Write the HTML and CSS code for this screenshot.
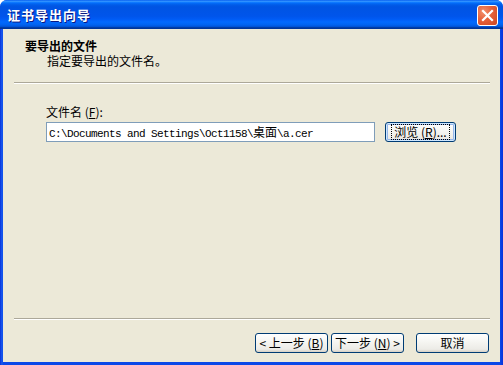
FILE: index.html
```html
<!DOCTYPE html>
<html lang="zh-CN">
<head>
<meta charset="utf-8">
<title>证书导出向导</title>
<link rel="stylesheet" href="styles.css">
</head>
<body>
<div class="window">
  <div class="titlebar">
    <span class="title">证书导出向导</span>
    <span class="close" aria-label="关闭">
      <svg width="13" height="13" viewBox="0 0 13 13"><path d="M2 2 L11 11 M11 2 L2 11" stroke="#fff" stroke-width="2.2" stroke-linecap="square"/></svg>
    </span>
  </div>
  <div class="client">
    <div class="header">
      <div class="h-title">要导出的文件</div>
      <div class="h-sub">指定要导出的文件名。</div>
    </div>
    <div class="sep"></div>
    <div class="body">
      <div class="label">文件名 (<u>F</u>):</div>
      <div class="row">
        <div class="input">C:\Documents and Settings\Oct1158\<span class="cjk">桌面</span>\a.cer</div>
        <div class="btn default"><span class="focus">浏览 (<u>R</u>)...</span></div>
      </div>
    </div>
    <div class="sep"></div>
    <div class="footer">
      <div class="btn">&lt; 上一步 (<u>B</u>)</div>
      <div class="btn">下一步 (<u>N</u>) &gt;</div>
      <div class="btn cancel">取消</div>
    </div>
  </div>
</div>
</body>
</html>
```

FILE: styles.css
```css
html, body {
  margin: 0;
  padding: 0;
  background: #ffffff;
}
body {
  font-family: "Noto Sans CJK SC", "Liberation Sans", sans-serif;
  font-size: 12px;
  color: #000;
}
.window {
  width: 503px;
  height: 365px;
  display: flex;
  flex-direction: column;
  border-radius: 7px 7px 0 0;
  overflow: hidden;
  background: linear-gradient(to right, #0831d9 0, #1a5cf0 2px, #0a48e8 3px, #0a48e8 500px, #0831d9 503px);
  box-sizing: border-box;
}
.titlebar {
  height: 29px;
  flex: 0 0 29px;
  display: flex;
  align-items: center;
  justify-content: space-between;
  padding: 0 5px 0 7px;
  background: linear-gradient(to bottom, #0058ee 0%, #3593ff 4%, #288eff 6%, #127dff 8%, #036ffc 10%, #0262ee 14%, #0057e5 20%, #0054e3 24%, #0055eb 56%, #005bf5 66%, #026afe 76%, #0062ef 86%, #0052d6 92%, #0040ab 94%, #003092 100%);
}
.title {
  color: #fff;
  font-weight: bold;
  font-size: 13px;
  letter-spacing: 1px;
  text-shadow: 1px 1px 0 #0a1883;
  line-height: 16px;
}
.close {
  width: 19px;
  height: 19px;
  margin-top: 1px;
  border: 1px solid #fff;
  border-radius: 3px;
  background: radial-gradient(circle at 30% 30%, #f28f6c 0, #e5603a 45%, #cc4520 100%);
  display: flex;
  align-items: center;
  justify-content: center;
}
.client {
  flex: 1;
  margin: 0 3px 3px 3px;
  background: #ece9d8;
  display: flex;
  flex-direction: column;
}
.header {
  padding: 9px 0 0 22px;
  line-height: 15px;
  height: 53px;
  box-sizing: border-box;
}
.h-title {
  font-weight: bold;
}
.h-sub {
  padding-left: 22px;
}
.sep {
  border-top: 1px solid #aca899;
  border-bottom: 1px solid #ffffff;
  margin: 0 10px 0 11px;
}
.body {
  flex: 1;
  padding: 21px 0 0 43px;
}
.label {
  line-height: 14px;
  height: 14px;
  margin-bottom: 3px;
}
.row {
  display: flex;
  gap: 10px;
  align-items: flex-start;
}
.input {
  width: 329px;
  height: 20px;
  box-sizing: border-box;
  border: 1px solid #7f9db9;
  background: #fff;
  padding: 0 2px;
  font-family: "Liberation Mono", monospace;
  font-size: 11px;
  letter-spacing: -0.6px;
  line-height: 18px;
  white-space: nowrap;
  overflow: hidden;
}
.input .cjk {
  font-family: "Noto Sans CJK SC", sans-serif;
  font-size: 12px;
  letter-spacing: 0;
}
.btn {
  width: 72px;
  height: 20px;
  box-sizing: border-box;
  border: 1px solid #003c74;
  border-radius: 3px;
  background: linear-gradient(to bottom, #ffffff 0%, #f4f4f0 50%, #ecebe6 85%, #d6d0c5 100%);
  display: flex;
  align-items: center;
  justify-content: center;
  line-height: 14px;
  white-space: nowrap;
}
.btn.default {
  width: 71px;
  box-shadow: inset 0 0 0 1px #cee7ff, inset 0 0 0 2px #98b8ea;
}
.focus {
  outline: 1px dotted #000;
  outline-offset: 0;
  padding: 0 2px;
}
.footer {
  display: flex;
  justify-content: flex-end;
  gap: 3px;
  padding: 13px 11px 9px 0;
}
.footer .btn {
  width: 73px;
}
.footer .btn.cancel {
  margin-left: 9px;
}
```
